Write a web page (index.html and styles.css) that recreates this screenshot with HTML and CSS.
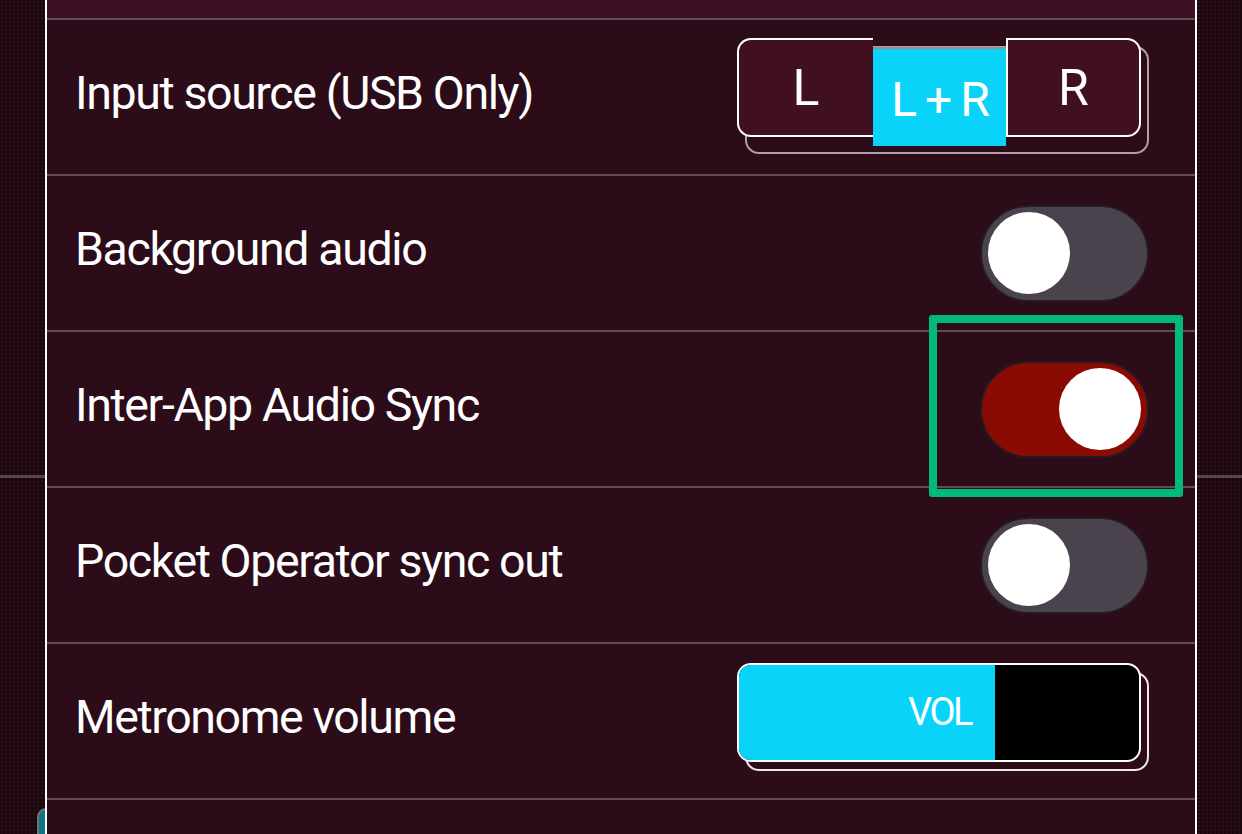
FILE: index.html
```html
<!DOCTYPE html>
<html>
<head>
<meta charset="utf-8">
<link rel="stylesheet" href="styles.css">
</head>
<body>
<div class="stage">
  <div class="gutter gutter-left"><div class="peek"></div></div>
  <div class="panel">
    <div class="strip"></div>
    <div class="row">
      <span class="label">Input source (USB Only)</span>
      <div class="seg">
        <div class="seg-btn seg-l">L</div>
        <div class="seg-btn seg-mid">L + R</div>
        <div class="seg-btn seg-r">R</div>
      </div>
    </div>
    <div class="row">
      <span class="label">Background audio</span>
      <div class="toggle"><div class="knob"></div></div>
    </div>
    <div class="row row-hl">
      <span class="label">Inter-App Audio Sync</span>
      <div class="toggle on"><div class="knob"></div></div>
      <div class="highlight"></div>
    </div>
    <div class="row">
      <span class="label">Pocket Operator sync out</span>
      <div class="toggle"><div class="knob"></div></div>
    </div>
    <div class="row">
      <span class="label">Metronome volume</span>
      <div class="slider">
        <div class="slider-track">
          <div class="slider-fill" style="width:256px"><span class="vol">VOL</span></div>
        </div>
      </div>
    </div>
    <div class="row row-last"></div>
  </div>
  <div class="gutter gutter-right"></div>
</div>
</body>
</html>
```
FILE: styles.css
```css
html, body {
  margin: 0;
  padding: 0;
  width: 1242px;
  height: 834px;
  overflow: hidden;
  background: #1a080e;
  font-family: Roboto, "Open Sans", sans-serif;
}

.stage {
  display: flex;
  width: 1242px;
  height: 834px;
  overflow: hidden;
}

.gutter {
  flex: 1;
  position: relative;
  background:
    linear-gradient(to bottom, transparent 475px, #54464c 475px, #54464c 478px, transparent 478px),
    radial-gradient(circle, rgba(120, 30, 60, 0.35) 0.6px, transparent 1px) 0 0 / 4px 4px,
    #1a080e;
}

.gutter-left { width: 45px; flex: none; }

.peek {
  position: absolute;
  left: 37px;
  top: 808px;
  width: 30px;
  height: 40px;
  border-radius: 9px;
  border: 2px solid #7a7077;
  background: #0c7685;
}

.panel {
  width: 1148px;
  height: 834px;
  flex: none;
  border-left: 2px solid #ffffff;
  border-right: 2px solid #ffffff;
  background: #2d0c1a;
  display: flex;
  flex-direction: column;
  position: relative;
  z-index: 1;
  overflow: hidden;
}

.strip {
  flex: none;
  height: 18px;
  background: #3e1024;
  border-bottom: 2px solid #5f4e57;
}

.row {
  height: 154px;
  border-bottom: 2px solid #5f4e57;
  display: flex;
  align-items: center;
  justify-content: space-between;
  padding: 0 46px 0 28px;
  position: relative;
  flex: none;
}

.row-last { border-bottom: none; }

.label {
  color: #ffffff;
  font-size: 46.5px;
  letter-spacing: -1.4px;
  margin-top: -8px;
}

/* segmented control */
.seg {
  position: relative;
  display: flex;
  padding: 0 8px 8px 0;
  margin-top: -2px;
}

.seg::before {
  content: "";
  position: absolute;
  left: 8px;
  top: 8px;
  right: 0;
  bottom: 0;
  border: 2px solid #b29fa9;
  border-radius: 14px;
}

.seg-btn {
  position: relative;
  height: 99px;
  display: flex;
  align-items: center;
  justify-content: center;
  color: #ffffff;
  font-size: 50px;
  box-sizing: border-box;
}

.seg-l {
  width: 136px;
  background: #401022;
  border: 2px solid #ffffff;
  border-right: none;
  border-radius: 14px 0 0 14px;
}

.seg-mid {
  width: 133px;
  margin-top: 9px;
  background: #0ad3f9;
  border-top: 2px solid #9c8d94;
  font-size: 48px;
  letter-spacing: -2px;
  padding-top: 4px;
}

.seg-r {
  width: 135px;
  background: #401022;
  border: 2px solid #ffffff;
  border-radius: 0 14px 14px 0;
}

/* toggles */
.toggle {
  width: 169px;
  height: 97px;
  box-sizing: border-box;
  border-radius: 49px;
  background: #4a434e;
  border: 2px solid #251b22;
  display: flex;
  align-items: center;
  padding: 0 6px;
}

.knob {
  width: 82px;
  height: 82px;
  border-radius: 50%;
  background: #ffffff;
}

.toggle.on {
  background: #8a0b03;
  justify-content: flex-end;
}

.highlight {
  position: absolute;
  left: 882px;
  top: -17px;
  width: 254px;
  height: 182px;
  box-sizing: border-box;
  border: 8px solid #00ba7b;
  border-radius: 3px;
}

/* slider */
.slider {
  position: relative;
  padding: 0 8px 9px 0;
  margin-top: -9px;
}

.slider::before {
  content: "";
  position: absolute;
  left: 8px;
  top: 9px;
  right: 0;
  bottom: 0;
  border: 2px solid #efe6ea;
  border-radius: 14px;
}

.slider-track {
  position: relative;
  width: 404px;
  height: 99px;
  box-sizing: border-box;
  border: 2px solid #ffffff;
  border-radius: 14px;
  background: #000000;
  overflow: hidden;
  display: flex;
}

.slider-fill {
  background: #0ad3f9;
  display: flex;
  align-items: center;
  justify-content: flex-end;
  padding-right: 24px;
  box-sizing: border-box;
}

.vol {
  color: #ffffff;
  font-size: 38px;
  letter-spacing: -2.5px;
}
```
